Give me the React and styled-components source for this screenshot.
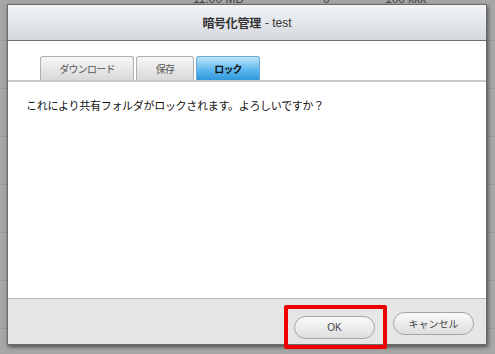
import React from 'react';
import styled, { createGlobalStyle } from 'styled-components';

const GlobalStyle = createGlobalStyle`
  html, body { margin: 0; padding: 0; }
  body {
    width: 495px;
    height: 354px;
    overflow: hidden;
    font-family: "Noto Sans CJK JP", "Liberation Sans", sans-serif;
  }
`;

const Page = styled.div`
  position: relative;
  width: 495px;
  height: 354px;
  background: #a7a7a7;
  overflow: hidden;
`;

const BgTable = styled.div`
  display: flex;
  flex-direction: column;
  margin-top: -7px;
`;

const BgRow = styled.div`
  display: grid;
  grid-template-columns: 193px 130px 62px 110px;
  height: 47px;
  border-bottom: 1px solid #9a9a9a;
  font-family: "Liberation Sans", "Noto Sans CJK JP", sans-serif;
  font-size: 12px;
  color: #444;
  line-height: 12px;
`;

const BgCell = styled.span`
  white-space: nowrap;
`;

const Dialog = styled.div`
  position: absolute;
  left: 7px;
  top: 4px;
  width: 480px;
  height: 341px;
  display: flex;
  flex-direction: column;
  background: #fff;
  border: 1px solid #6a6a6a;
  box-sizing: border-box;
  box-shadow: 1px 2px 4px rgba(0, 0, 0, 0.55);
`;

const Header = styled.div`
  height: 35px;
  display: flex;
  align-items: center;
  justify-content: center;
  background: linear-gradient(#f2f4f6, #d4d9df);
  border-bottom: 1px solid #6e6e6e;
  font-size: 12px;
  color: #333;
`;

const TitleStrong = styled.span`
  font-weight: bold;
  margin-right: 4px;
  letter-spacing: -0.3px;
`;

const TitleName = styled.span`
  font-family: "Liberation Sans", sans-serif;
`;

const Body = styled.div`
  flex: 1;
  display: flex;
  flex-direction: column;
`;

const TabStrip = styled.div`
  display: flex;
  gap: 2px;
  padding: 15px 0 0 32px;
  border-bottom: 2px solid #c9c9c9;
`;

const Tab = styled.div`
  height: 24px;
  width: ${p => p.$w}px;
  box-sizing: border-box;
  display: flex;
  align-items: center;
  justify-content: center;
  border: 1px solid ${p => (p.$active ? '#6aa6cf' : '#b0b0b0')};
  border-bottom: none;
  border-radius: 3px 3px 0 0;
  background: ${p =>
    p.$active
      ? 'linear-gradient(#bfe5fb, #5fb8ee 55%, #2f98dd)'
      : 'linear-gradient(#f7f7f7, #d9d9d9)'};
  font-size: 10px;
  letter-spacing: -0.8px;
  font-weight: ${p => (p.$active ? 'bold' : 'normal')};
  color: ${p => (p.$active ? '#111' : '#555')};
`;

const Message = styled.p`
  margin: 15px 0 0 18px;
  font-size: 11px;
  letter-spacing: -0.3px;
  line-height: 16px;
  color: #111;
`;

const Footer = styled.div`
  height: 46px;
  display: flex;
  align-items: flex-start;
  justify-content: flex-end;
  gap: 6px;
  padding: 6px 12px 0 0;
  box-sizing: border-box;
  background: #e6e6e6;
  border-top: 1px solid #b8b8b8;
`;

const Highlight = styled.div`
  border: 4px solid #ee0000;
  border-radius: 2px;
  padding: 3px 8px 6px 6px;
`;

const Button = styled.button`
  width: 81px;
  height: 23px;
  border: 1px solid #a3a3a3;
  border-radius: 12px;
  background: linear-gradient(#fafafa, #dedede);
  font-family: "Liberation Sans", "Noto Sans CJK JP", sans-serif;
  font-size: 10px;
  color: #444;
  padding: 0;
  margin-top: ${p => p.$top || 0}px;
`;

export default function App() {
  return (
    <Page>
      <GlobalStyle />
      <BgTable>
        <BgRow>
          <BgCell>&nbsp;</BgCell>
          <BgCell>11.00 MB</BgCell>
          <BgCell>0</BgCell>
          <BgCell>100 kkk</BgCell>
        </BgRow>
        <BgRow />
        <BgRow />
        <BgRow />
        <BgRow />
        <BgRow />
        <BgRow />
        <BgRow />
      </BgTable>
      <Dialog>
        <Header>
          <TitleStrong>暗号化管理</TitleStrong>
          <TitleName>- test</TitleName>
        </Header>
        <Body>
          <TabStrip>
            <Tab $w={94}>ダウンロード</Tab>
            <Tab $w={58}>保存</Tab>
            <Tab $w={64} $active>ロック</Tab>
          </TabStrip>
          <Message>これにより共有フォルダがロックされます。よろしいですか？</Message>
        </Body>
        <Footer>
          <Highlight>
            <Button>OK</Button>
          </Highlight>
          <Button $top={7}>キャンセル</Button>
        </Footer>
      </Dialog>
    </Page>
  );
}
